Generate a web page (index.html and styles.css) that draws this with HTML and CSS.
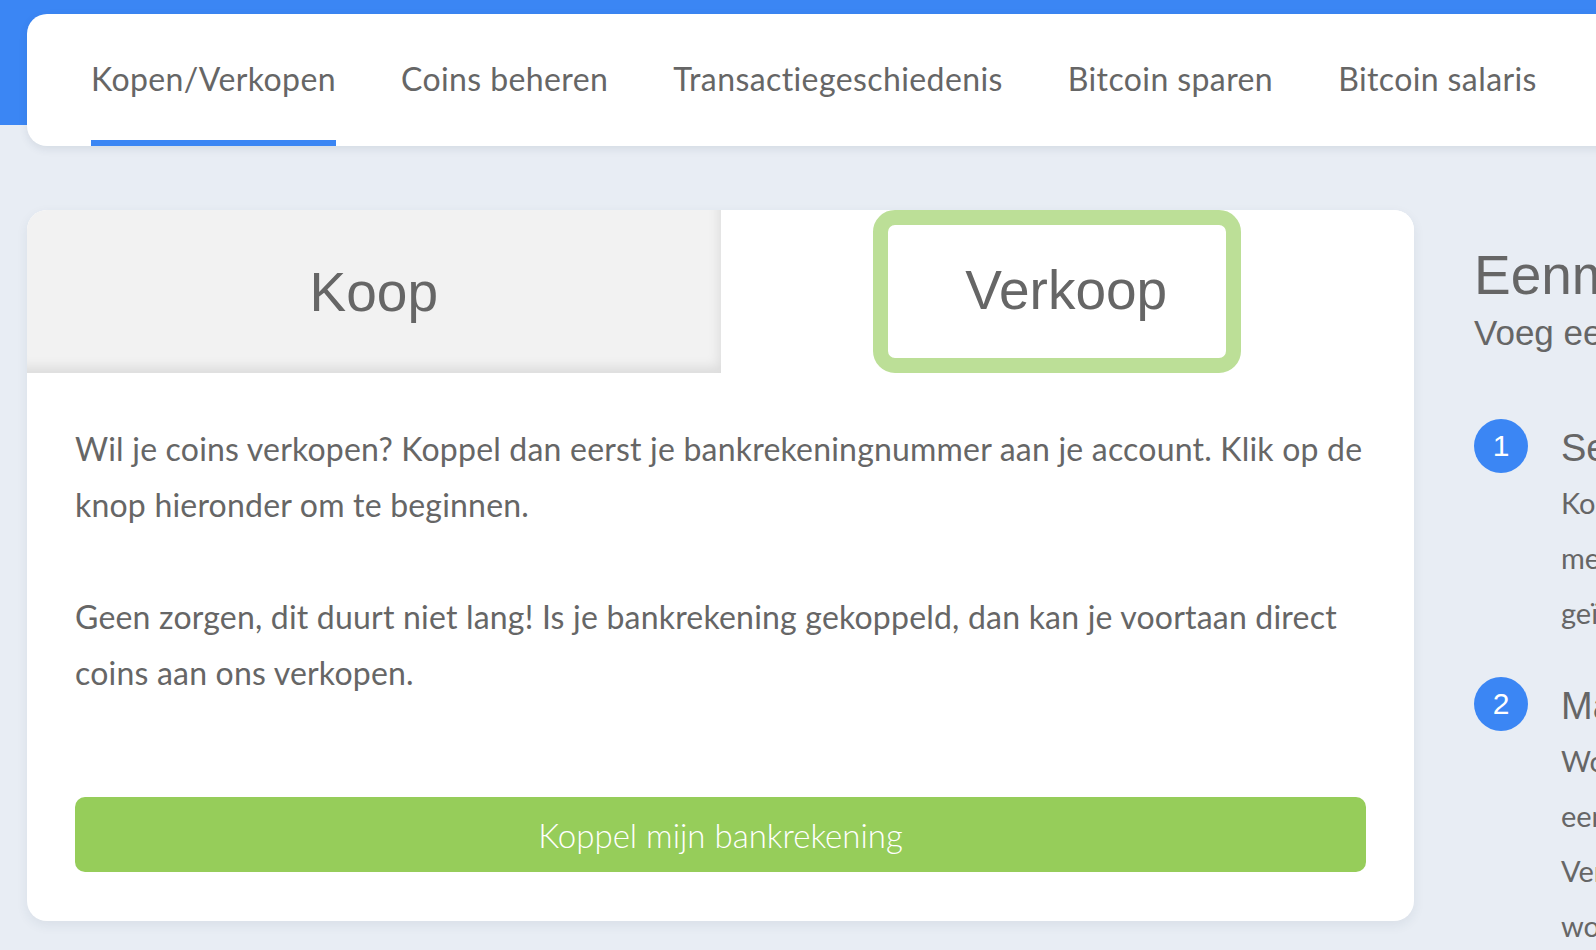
FILE: index.html
```html
<!DOCTYPE html>
<html lang="nl">
<head>
<meta charset="utf-8">
<title>Kopen/Verkopen</title>
<link rel="stylesheet" href="styles.css">
</head>
<body>
<div class="page">
  <header class="topbar"></header>
  <nav class="nav">
    <a class="nav-item active">Kopen/Verkopen</a>
    <a class="nav-item">Coins beheren</a>
    <a class="nav-item">Transactiegeschiedenis</a>
    <a class="nav-item">Bitcoin sparen</a>
    <a class="nav-item">Bitcoin salaris</a>
  </nav>
  <main class="main">
    <section class="card">
      <div class="tabs">
        <div class="tab tab-koop">Koop</div>
        <div class="tab tab-verkoop"><span class="tab-focus">Verkoop</span></div>
      </div>
      <div class="card-body">
        <p class="text">Wil je coins verkopen? Koppel dan eerst je bankrekeningnummer aan je account. Klik op de knop hieronder om te beginnen.</p>
        <p class="text">Geen zorgen, dit duurt niet lang! Is je bankrekening gekoppeld, dan kan je voortaan direct coins aan ons verkopen.</p>
        <button class="btn">Koppel mijn bankrekening</button>
      </div>
    </section>
    <aside class="side">
      <h2 class="side-title">Eenmalige koppeling</h2>
      <p class="side-sub">Voeg eenmalig je bankrekening toe</p>
      <div class="step">
        <div class="step-num">1</div>
        <div class="step-content">
          <h3 class="step-title">Selecteer je bank</h3>
          <p class="step-text">Koppel je rekening via iDEAL<br>met een kleine betaling van €0,01<br>ge­ïdentificeerd door je eigen bank.</p>
        </div>
      </div>
      <div class="step">
        <div class="step-num">2</div>
        <div class="step-content">
          <h3 class="step-title">Maak je eerste verkoop</h3>
          <p class="step-text">Wordt je rekening gekoppeld, dan volgt<br>een bevestiging per e-mail.<br>Verkopen kan daarna direct en<br>wordt snel uitbetaald.</p>
        </div>
      </div>
    </aside>
  </main>
</div>
</body>
</html>
```

FILE: styles.css
```css
html, body {
  margin: 0;
  padding: 0;
}
body {
  background: #e8edf4;
  overflow: hidden;
  width: 1596px;
  height: 950px;
  font-family: Lato, "Liberation Sans", sans-serif;
  color: #666666;
}
.page {
  width: 1596px;
  overflow: hidden;
  height: 950px;
}
.topbar {
  height: 125px;
  background: #3b86f4;
}
.nav {
  margin: -111px -60px 0 27px;
  height: 132px;
  background: #ffffff;
  border-radius: 20px;
  box-shadow: 0 3px 8px rgba(40, 60, 90, 0.10);
  display: flex;
  align-items: stretch;
  gap: 65px;
  padding-left: 64px;
}
.nav-item {
  display: flex;
  align-items: center;
  font-size: 32px;
  letter-spacing: 0.4px;
  color: #666666;
  padding-bottom: 4px;
  white-space: nowrap;
}
.nav-item.active {
  box-shadow: inset 0 -6px 0 #3b86f4;
}
.main {
  display: flex;
  align-items: flex-start;
  gap: 60px;
  padding: 64px 0 0 27px;
}
.card {
  flex: 0 0 1387px;
  background: #ffffff;
  border-radius: 20px;
  box-shadow: 0 4px 12px rgba(40, 60, 90, 0.08);
  overflow: hidden;
}
.tabs {
  display: flex;
  height: 163px;
}
.tab {
  flex: 1 1 0;
  display: flex;
  align-items: center;
  justify-content: center;
  font-family: "Liberation Sans", Arial, sans-serif;
  font-size: 55px;
  color: #666666;
}
.tab-koop {
  background: #f2f2f2;
  box-shadow: inset -6px -10px 12px -4px rgba(0, 0, 0, 0.09);
}
.tab-verkoop {
  background: #ffffff;
}
.tab-focus {
  box-sizing: border-box;
  height: 163px;
  display: flex;
  align-items: center;
  padding: 0 59px 4px 77px;
  border: 15px solid #bcdf97;
  border-radius: 22px;
  margin-right: 20px;
}
.card-body {
  padding: 48px 48px 49px 48px;
}
.text {
  margin: 0 0 56px 0;
  font-size: 32px;
  line-height: 56px;
  letter-spacing: 0.2px;
}
.text:last-of-type {
  margin-bottom: 96px;
}
.btn {
  display: block;
  width: 100%;
  height: 75px;
  border: none;
  border-radius: 10px;
  background: #96cd5a;
  color: #ffffff;
  font-family: Lato, "Liberation Sans", sans-serif;
  font-size: 33px;
  font-weight: 300;
  cursor: pointer;
}
.side {
  flex: 0 0 500px;
  padding-top: 32px;
  white-space: nowrap;
}
.side-title {
  margin: 0;
  font-family: "Liberation Sans", Arial, sans-serif;
  font-size: 55px;
  line-height: 66px;
  font-weight: 400;
  color: #666666;
}
.side-sub {
  margin: 4px 0 0 0;
  font-family: "Liberation Sans", Arial, sans-serif;
  font-size: 35px;
  line-height: 42px;
}
.step {
  display: flex;
  gap: 33px;
  align-items: flex-start;
  margin-top: 65px;
}
.step + .step {
  margin-top: 37px;
}
.step-num {
  flex: 0 0 54px;
  height: 54px;
  border-radius: 50%;
  background: #3b86f4;
  color: #ffffff;
  display: flex;
  align-items: center;
  justify-content: center;
  font-family: "Liberation Sans", Arial, sans-serif;
  font-size: 30px;
}
.step-title {
  margin: 2px 0 0 0;
  font-family: "Liberation Sans", Arial, sans-serif;
  font-size: 38px;
  line-height: 54px;
  font-weight: 400;
  color: #666666;
}
.step-text {
  margin: 0;
  font-size: 29px;
  line-height: 55px;
}
```
